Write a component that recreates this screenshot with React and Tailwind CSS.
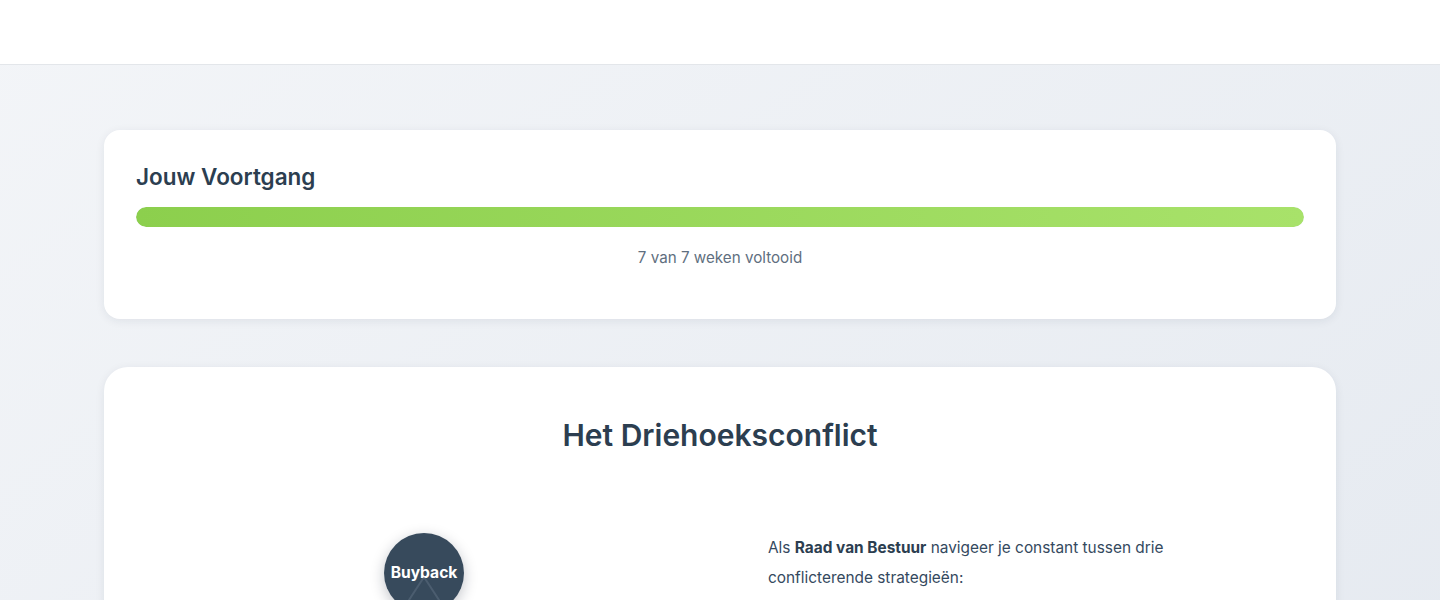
import React from "react";

const Header = () => (
  <header className="h-[65px] bg-white border-b border-[#e3e6ea]" />
);

const ProgressCard = ({ done, total }) => (
  <section className="bg-white rounded-2xl shadow-[0_2px_10px_rgba(30,41,59,0.08)] px-8 pt-8 pb-8">
    <h2 className="text-[22.5px] leading-[30px] font-semibold text-[#2c3e50]">Jouw Voortgang</h2>
    <div className="mt-[15px] h-5 rounded-full bg-[#e8edf2] overflow-hidden">
      <div
        className="h-full rounded-full bg-linear-to-r from-[#8ccf4d] to-[#a8e26a]"
        style={{ width: `${(done / total) * 100}%` }}
      />
    </div>
    <p className="mt-[19px] mb-[17px] text-center text-[15.2px] leading-6 text-[#5f6f80]">
      {done} van {total} weken voltooid
    </p>
  </section>
);

const Triangle = () => (
  <div className="relative h-[360px]">
    <div className="absolute left-1/2 -translate-x-1/2 top-0 w-20 h-20 rounded-full bg-[#374a5c] shadow-[0_4px_14px_rgba(15,23,42,0.25)] flex items-center justify-center">
      <span className="text-white font-bold text-[15.6px]">Buyback</span>
    </div>
    <svg className="absolute inset-0 w-full h-full pointer-events-none" viewBox="0 0 544 360">
      <line x1="272" y1="44" x2="92" y2="320" stroke="#94a3b8" strokeOpacity="0.22" strokeWidth="2" />
      <line x1="272" y1="44" x2="452" y2="320" stroke="#94a3b8" strokeOpacity="0.22" strokeWidth="2" />
      <line x1="92" y1="320" x2="452" y2="320" stroke="#94a3b8" strokeOpacity="0.22" strokeWidth="2" />
    </svg>
  </div>
);

const ConflictCard = () => (
  <section className="bg-white rounded-[24px] shadow-[0_2px_10px_rgba(30,41,59,0.08)] px-12 pt-[50px] pb-12">
    <h2 className="text-center text-[30px] leading-9 font-semibold text-[#2c3e50]">Het Driehoeksconflict</h2>
    <div className="mt-[80px] grid grid-cols-2 gap-12">
      <Triangle />
      <div className="pl-6">
        <p className="max-w-[440px] text-[15.4px] leading-[30px] text-[#34495e]">
          Als <strong className="font-bold text-[#2c3e50]">Raad van Bestuur</strong> navigeer je constant tussen drie
          conflicterende strategieën:
        </p>
      </div>
    </div>
  </section>
);

export default function App() {
  return (
    <div
      className="min-h-screen bg-linear-to-br from-[#f3f5f8] to-[#e3e8ef]"
      style={{ fontFamily: "Inter, 'Noto Sans', sans-serif" }}
    >
      <Header />
      <main className="w-[1232px] mx-auto pt-[65px] pb-16 flex flex-col gap-12">
        <ProgressCard done={7} total={7} />
        <ConflictCard />
      </main>
    </div>
  );
}
